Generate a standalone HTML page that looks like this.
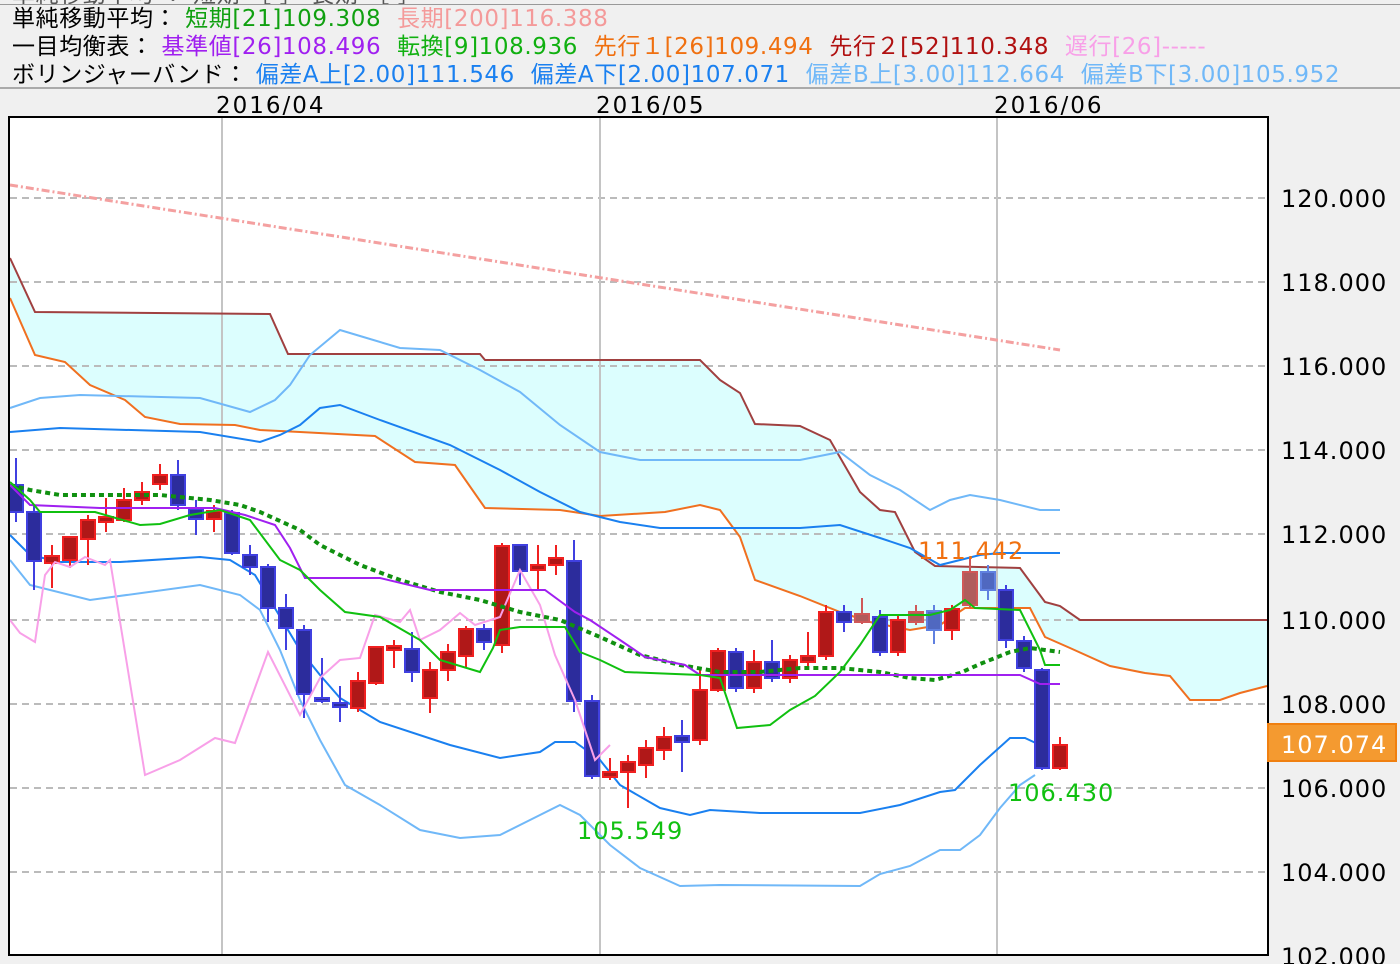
<!DOCTYPE html>
<html><head><meta charset="utf-8"><style>
html,body{margin:0;padding:0;background:#f0f0f0;width:1400px;height:964px;overflow:hidden;font-family:"DejaVu Sans","Noto Sans CJK JP",sans-serif;}
.hdr{position:absolute;left:12px;font-size:23px;letter-spacing:0.6px;white-space:nowrap;color:#000;line-height:26px;}
</style></head><body>
<div class="hdr" style="top:-18px;color:#555">単純移動平均 ： 短期 ［ ］ 長期 ［ ］</div>
<div style="position:absolute;left:0;top:4px;width:1400px;height:1px;background:#999"></div>
<div class="hdr" style="top:6px">単純移動平均： <span style="color:#10a010">短期[21]109.308</span>&nbsp; <span style="color:#f49a9a">長期[200]116.388</span></div>
<div class="hdr" style="top:34px">一目均衡表： <span style="color:#a020f0">基準値[26]108.496</span>&nbsp; <span style="color:#10b010">転換[9]108.936</span>&nbsp; <span style="color:#f07010">先行１[26]109.494</span>&nbsp; <span style="color:#b01010">先行２[52]110.348</span>&nbsp; <span style="color:#f8a0e8">遅行[26]-----</span></div>
<div class="hdr" style="top:62px">ボリンジャーバンド： <span style="color:#1a80f0">偏差A上[2.00]111.546</span>&nbsp; <span style="color:#1a80f0">偏差A下[2.00]107.071</span>&nbsp; <span style="color:#70b8f8">偏差B上[3.00]112.664</span>&nbsp; <span style="color:#70b8f8">偏差B下[3.00]105.952</span></div>
<div style="position:absolute;left:0;top:87px;width:1400px;height:2px;background:#aaa"></div>
<svg id="c" width="1400" height="964" style="position:absolute;left:0;top:0" xmlns="http://www.w3.org/2000/svg"></svg>
<script>
var F='font-family="DejaVu Sans,sans-serif"';
var s='';
s+='<rect x="9" y="117" width="1259" height="838" fill="#fff"/>';
var s2=[[10,258],[35,312],[270,314],[288,354],[480,354],[485,360],[700,360],[720,380],[740,393],[755,424],[800,426],[830,440],[860,492],[880,510],[895,512],[915,552],[935,566],[1020,568],[1045,602],[1060,606],[1080,620],[1267,620]];
var s1=[[10,298],[35,355],[65,362],[90,385],[125,400],[145,417],[180,424],[235,425],[260,430],[300,432],[375,436],[415,462],[455,465],[485,508],[560,510],[600,516],[665,512],[700,505],[720,510],[740,537],[755,580],[800,596],[840,612],[870,622],[910,630],[940,625],[965,608],[1030,608],[1045,637],[1070,648],[1110,666],[1145,673],[1170,676],[1190,700],[1220,700],[1240,693],[1267,686]];
var poly=s2.concat(s1.slice().reverse());
s+='<polygon fill="#dcfefe" points="'+poly.map(function(q){return q.join(',')}).join(' ')+'"/>';
[198,282,366,450,534,620,704,788,872].forEach(function(y){s+='<line x1="10" x2="1267" y1="'+y+'" y2="'+y+'" stroke="#bbb" stroke-width="2" stroke-dasharray="7,5"/>';});
[222,600,997].forEach(function(x){s+='<line x1="'+x+'" x2="'+x+'" y1="118" y2="955" stroke="#c4c4c4" stroke-width="2"/>';});
function pl(p,c,w,extra){return '<polyline fill="none" stroke="'+c+'" stroke-width="'+w+'" '+(extra||'')+' points="'+p.map(function(q){return q.join(',')}).join(' ')+'"/>';}
s+=pl([[10,185],[1060,350]],'#f4a0a0',3,'stroke-dasharray="8,3,2,3"');
s+=pl(s2,'#a04040',2);
s+=pl(s1,'#f07020',2);
s+=pl([[10,432],[60,428],[200,432],[260,442],[280,435],[300,425],[320,408],[340,405],[380,420],[450,445],[500,470],[540,492],[580,512],[620,522],[660,528],[800,528],[840,525],[880,538],[910,548],[940,565],[980,555],[1000,553],[1060,553]],'#1a80f0',2);
s+=pl([[10,535],[30,555],[60,562],[120,562],[200,557],[230,560],[255,575],[270,600],[300,650],[320,675],[340,698],[380,722],[450,745],[500,758],[540,752],[555,742],[575,742],[600,760],[620,785],[660,808],[690,815],[710,810],[760,813],[860,813],[900,805],[940,792],[955,790],[980,765],[1010,738],[1025,738],[1040,745]],'#1a80f0',2);
s+=pl([[10,408],[40,398],[80,395],[200,398],[250,412],[275,400],[290,385],[310,355],[340,330],[360,336],[400,348],[440,350],[480,370],[520,392],[560,425],[600,452],[640,460],[800,460],[840,452],[870,475],[900,490],[930,510],[950,500],[970,495],[1000,500],[1040,510],[1060,510]],'#70b8f8',2);
s+=pl([[10,560],[30,585],[90,600],[200,585],[240,595],[260,610],[280,650],[300,700],[320,740],[345,785],[380,805],[420,830],[460,838],[500,835],[530,820],[560,805],[580,815],[610,845],[640,868],[680,886],[720,885],[860,886],[880,874],[910,866],[940,850],[960,850],[980,835],[1000,808],[1020,785],[1035,775]],'#70b8f8',2);
var C=[['b',485,512,458,522],['b',512,561,505,590],['r',556,563,545,588],['r',537,560,537,568],['r',520,539,515,565],['r',517,522,498,532],['r',500,520,488,522],['r',492,500,482,505],['r',475,484,464,490],['b',475,505,460,510],['b',509,519,500,535],['r',511,519,505,532],['b',513,553,510,555],['b',555,567,545,575],['b',567,608,564,622],['b',608,628,594,650],['b',630,694,625,718],['b',698,701,658,703],['b',703,707,686,722],['r',681,708,672,712],['r',647,683,647,685],['r',646,650,640,668],['b',649,672,632,682],['r',670,698,662,713],['r',652,670,644,681],['r',629,656,626,667],['b',629,642,624,650],['r',546,645,543,653],['b',545,571,545,585],['r',565,570,545,590],['r',558,565,545,575],['b',561,701,540,712],['b',701,776,695,779],['r',772,777,758,780],['r',762,772,755,808],['r',748,765,740,778],['r',737,750,727,760],['b',736,742,720,772],['r',690,740,668,745],['r',651,690,648,692],['b',652,688,648,692],['r',662,688,650,693],['b',662,678,640,682],['r',660,678,655,683],['r',656,662,632,668],['r',612,656,605,660],['b',612,622,605,632],['R',614,622,598,624],['b',617,652,610,656],['r',620,652,615,656],['R',612,622,605,625],['B',611,630,605,644],['r',609,630,605,640],['R',572,605,558,608],['B',572,590,565,600],['b',590,640,585,648],['b',641,668,636,672],['b',670,768,668,770],['r',745,768,737,770]];
C.forEach(function(c,i){var x=16+i*18;var col={b:['#2c2c9c','#4040e0'],r:['#b01818','#f02020'],R:['#b05c5c','#d05858'],B:['#5068c0','#6080e0']}[c[0]];
s+='<line x1="'+x+'" x2="'+x+'" y1="'+c[3]+'" y2="'+c[4]+'" stroke="'+col[1]+'" stroke-width="2"/>';
s+='<rect x="'+(x-7)+'" y="'+c[1]+'" width="14" height="'+Math.max(2,c[2]-c[1])+'" fill="'+col[0]+'" stroke="'+col[1]+'" stroke-width="2"/>';});
s+=pl([[10,620],[20,633],[35,642],[45,575],[55,562],[70,567],[85,557],[105,565],[110,560],[145,775],[180,760],[215,738],[235,743],[268,652],[300,715],[320,678],[340,660],[360,658],[375,615],[400,622],[410,610],[420,640],[440,630],[460,613],[475,625],[500,617],[520,570],[540,605],[555,655],[575,700],[595,760],[610,745]],'#f8a0e8',2);
s+=pl([[10,485],[30,490],[60,495],[100,495],[160,495],[210,500],[240,505],[260,512],[300,530],[320,545],[360,565],[400,580],[440,592],[480,600],[520,612],[560,620],[600,637],[640,655],[680,665],[720,672],[760,672],[800,668],[840,668],[880,672],[910,678],[935,680],[960,673],[980,664],[1010,652],[1030,648],[1060,652]],'#109010',4,'stroke-dasharray="5,4"');
s+=pl([[10,485],[30,505],[100,508],[215,508],[245,515],[275,525],[290,548],[305,578],[380,578],[430,590],[545,590],[575,612],[590,620],[620,640],[645,657],[685,665],[700,675],[1020,675],[1040,684],[1060,684]],'#a020f0',2);
s+=pl([[10,482],[30,500],[40,512],[95,512],[140,525],[160,524],[190,515],[220,510],[250,520],[280,560],[300,570],[320,590],[345,612],[380,617],[420,640],[440,660],[480,672],[493,648],[500,630],[520,627],[565,627],[580,652],[600,660],[625,672],[700,675],[720,678],[737,728],[770,725],[790,710],[815,696],[840,672],[860,645],[880,615],[930,615],[950,610],[965,600],[975,608],[1020,610],[1040,650],[1045,665],[1060,665]],'#10c010',2);
s+='<text x="918" y="559" font-size="24" letter-spacing="1" fill="#f07010" '+F+'>111.442</text>';
s+='<text x="1008" y="801" font-size="24" letter-spacing="1" fill="#10c010" '+F+'>106.430</text>';
s+='<text x="577" y="839" font-size="24" letter-spacing="1" fill="#10c010" '+F+'>105.549</text>';
s+='<rect x="1268" y="117" width="132" height="847" fill="#f0f0f0"/>';
s+='<rect x="9" y="117" width="1259" height="838" fill="none" stroke="#000" stroke-width="2"/>';
var L=[[198,'120.000'],[282,'118.000'],[366,'116.000'],[450,'114.000'],[534,'112.000'],[620,'110.000'],[704,'108.000'],[788,'106.000'],[872,'104.000'],[956,'102.000']];
L.forEach(function(l){s+='<text x="1281" y="'+(l[0]+9)+'" font-size="24" letter-spacing="1" fill="#000" '+F+'>'+l[1]+'</text>';});
s+='<rect x="1268" y="724" width="128" height="37" fill="#f49a30" stroke="#f08010" stroke-width="2"/>';
s+='<text x="1281" y="753" font-size="24" letter-spacing="1" fill="#fff" '+F+'>107.074</text>';
[[216,'2016/04'],[596,'2016/05'],[994,'2016/06']].forEach(function(t){s+='<text x="'+t[0]+'" y="113" font-size="23" letter-spacing="2" fill="#000" '+F+'>'+t[1]+'</text>';});
document.getElementById('c').innerHTML=s;
</script>
</body></html>
